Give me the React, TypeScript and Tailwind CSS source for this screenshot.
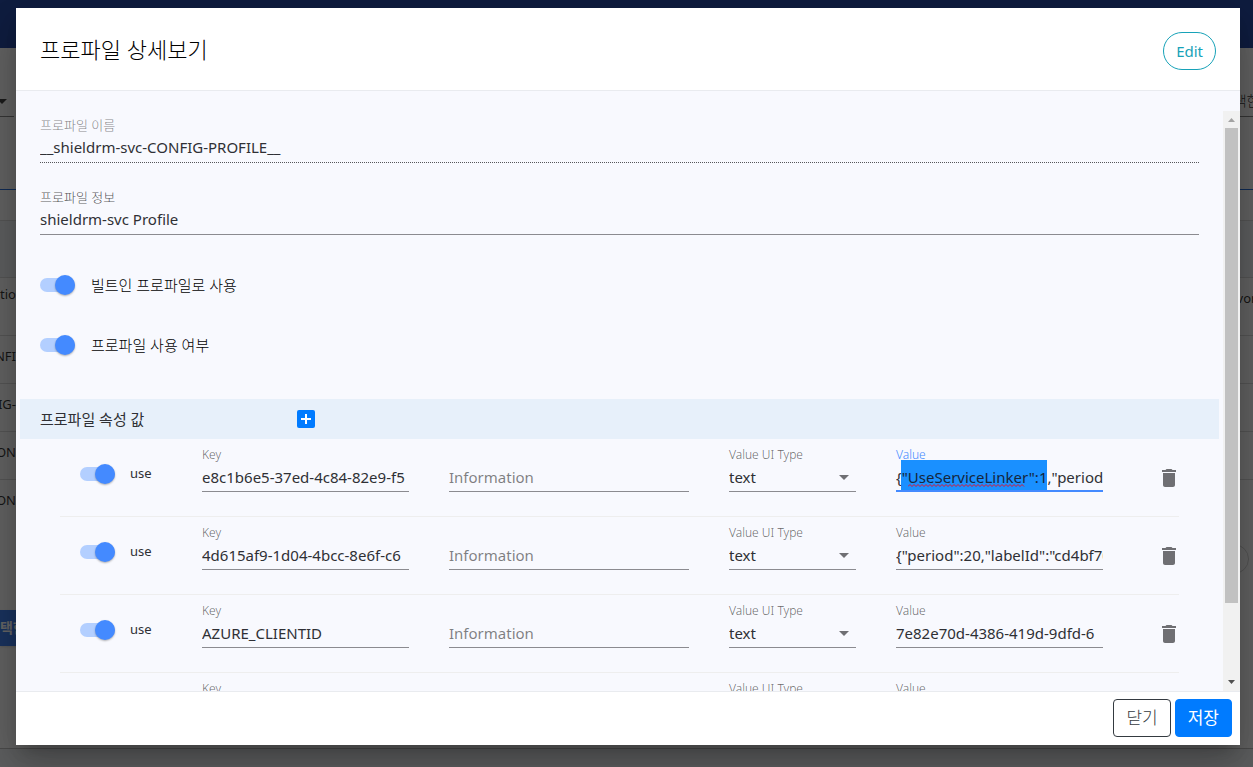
// ProfileDetailDialog: profile detail / edit dialog over the profile list page

import { useEffect, useRef } from 'react';

interface ProfileProperty {
  id: string;
  key: string;
  value: string;
}

const PROPERTIES: ProfileProperty[] = [
  { id: 'p1', key: 'e8c1b6e5-37ed-4c84-82e9-f5', value: '{"UseServiceLinker":1,"period":20}' },
  { id: 'p2', key: '4d615af9-1d04-4bcc-8e6f-c6', value: '{"period":20,"labelId":"cd4bf70"}' },
  { id: 'p3', key: 'AZURE_CLIENTID', value: '7e82e70d-4386-419d-9dfd-6' },
  { id: 'p4', key: '', value: '' },
];

// Part of the first value that is selected when the dialog opens
const SELECTED = '"UseServiceLinker":1';

const SQUIGGLE = 'M0 2.5' + 'l2 -2l2 2'.repeat(29);

function Toggle({ id, label, gap }: { id: string; label: string; gap: string }) {
  return (
    <label htmlFor={id} className={`flex items-center whitespace-nowrap ${gap}`}>
      <span className="relative flex h-5 w-[35px] shrink-0 items-center">
        <input id={id} type="checkbox" defaultChecked className="peer sr-only" />
        <span className="h-3.5 w-full rounded-full bg-[#b3cfff]" />
        <span className="absolute right-0 top-0 size-5 rounded-full bg-[#448aff] shadow-[0_1px_2px_rgba(0,0,0,0.3)]" />
      </span>
      {label}
    </label>
  );
}

function Background() {
  return (
    <div className="fixed inset-0 flex flex-col overflow-hidden bg-[#f8f8f8] text-[13px] font-normal leading-4 text-black/80" aria-hidden="true">
      <div className="h-12 shrink-0 bg-[#264aa0]" />

      <div className="flex h-[69px] shrink-0 items-end justify-between">
        <div className="flex h-7 w-3.5 justify-start border-b border-[#888]">
          <svg viewBox="0 0 7 5" className="mt-2.5 h-[5px] w-[7px]">
            <path d="M-3 0H7L2 5z" fill="#444" />
          </svg>
        </div>
        <div className="flex h-7 w-[13px] justify-center border-b border-[#888] text-sm font-light leading-6 whitespace-nowrap">택한</div>
      </div>
      <div className="h-[73px] shrink-0 border-b border-[#2a6fd6]" />
      <div className="h-[31px] shrink-0 border-b border-[#d4d4d4]" />
      <div className="h-[57px] shrink-0 border-b border-[#d4d4d4] bg-[#eceef1]" />
      <div className="flex h-[58px] shrink-0 items-start justify-between border-b border-[#d4d4d4] pt-2">
        <span className="w-4">tio</span>
        <span className="flex w-[13px] justify-center pt-1">vor</span>
      </div>
      {['NFI', 'FIG-', 'CON', 'CON'].map((text, i) => (
        <div key={i} className={`flex h-12 shrink-0 items-start pt-3 ${i < 3 ? 'border-b border-[#d4d4d4]' : ''}`}>
          <span className="flex w-4 justify-end">{text}</span>
        </div>
      ))}
      <div className="flex h-[82px] shrink-0 justify-end pt-4">
        <span className="mr-1 size-[30px] rounded-full border border-[#d0d0d0]" />
      </div>
      <div className="flex h-9 w-20 shrink-0 items-center bg-[#4180ee] text-sm font-bold text-white shadow">택한</div>
      <div className="mt-auto h-[19px] shrink-0 border-t border-[#bbb] bg-[#eceef1]" />

      <div className="absolute inset-0 bg-black/60" />
    </div>
  );
}

function PropertyRow({ item, active }: { item: ProfileProperty; active: boolean }) {
  const valueRef = useRef<HTMLInputElement>(null);

  useEffect(() => {
    const input = valueRef.current;
    if (!active || !input) return;
    const start = input.value.indexOf(SELECTED);
    input.focus({ preventScroll: true });
    input.setSelectionRange(start, start + SELECTED.length);
    input.scrollLeft = 0;
  }, [active]);

  const label = 'block text-[12px] leading-4 text-black/60';
  const field = 'block h-[29px] w-full min-w-0 rounded-none border-b border-[#8b8b90] bg-transparent text-[15px] font-normal outline-none';

  return (
    <div className="mx-10 grid h-[78px] grid-cols-[82px_minmax(0,207fr)_minmax(0,240fr)_minmax(0,127fr)_minmax(0,207fr)_36px] gap-x-10 border-b border-[#eeeeee] pl-5 pt-2">
      <div className="pt-[17px] text-[13px] font-normal">
        <Toggle id={`${item.id}-use`} label="use" gap="gap-[15px]" />
      </div>

      <div>
        <label htmlFor={`${item.id}-key`} className={label}>Key</label>
        <input id={`${item.id}-key`} defaultValue={item.key} className={field} />
      </div>

      <div className="pt-4">
        <input aria-label="Information" placeholder="Information" className={`${field} placeholder:text-black/50`} />
      </div>

      <div>
        <label htmlFor={`${item.id}-type`} className={label}>Value UI Type</label>
        <div className="relative">
          <select id={`${item.id}-type`} className={`${field} appearance-none`}>
            <option>text</option>
          </select>
          <svg viewBox="0 0 10 5" className="pointer-events-none absolute right-[7px] top-3 h-[5px] w-2.5">
            <path d="M0 0h10L5 5z" fill="#6f6f73" />
          </svg>
        </div>
      </div>

      <div className="relative">
        {/* full line height behind the selected text */}
        {active && <span className="absolute left-[5px] top-[13px] h-8 w-[146px] bg-[#1a90ff]" />}
        <label htmlFor={`${item.id}-value`} className={`relative block text-[12px] leading-4 ${active ? 'text-[#448aff]' : 'text-black/60'}`}>
          Value
        </label>
        <input
          ref={valueRef}
          id={`${item.id}-value`}
          defaultValue={item.value}
          spellCheck={false}
          className={`relative block h-[29px] w-full min-w-0 rounded-none bg-transparent text-[15px] font-normal outline-none selection:bg-[#1a90ff]/99 selection:text-[#15263c] ${
            active ? 'border-b-2 border-[#448aff]' : 'border-b border-[#8b8b90]'
          }`}
        />
        {/* spelling underline */}
        {active && (
          <svg viewBox="0 0 118 3" className="pointer-events-none absolute left-[12px] top-[37px] h-[3px] w-[118px]">
            <path d={SQUIGGLE} fill="none" stroke="#e0142c" />
          </svg>
        )}
      </div>

      <button type="button" aria-label="Delete" className="mt-[22px] flex h-[18px] w-5 justify-center justify-self-end">
        <svg viewBox="5 3 14 18" className="h-[18px] w-3.5">
          <path d="M6 19c0 1.1.9 2 2 2h8c1.1 0 2-.9 2-2V7H6v12zM19 4h-3.5l-1-1h-5l-1 1H5v2h14V4z" fill="#6f6f73" />
        </svg>
      </button>
    </div>
  );
}

function Scrollbar() {
  return (
    <div className="flex w-[17px] shrink-0 flex-col items-center bg-[#f1f1f1]" aria-hidden="true">
      <svg viewBox="0 0 17 17" className="size-[17px] shrink-0">
        <path d="M5 11h7L8.5 7z" fill="#a3a3a3" />
      </svg>
      <div className="flex w-[13px] flex-1 flex-col">
        <div className="h-[87%] bg-[#c1c1c1]" />
      </div>
      <svg viewBox="0 0 17 17" className="size-[17px] shrink-0">
        <path d="M5 6h7L8.5 10z" fill="#505050" />
      </svg>
    </div>
  );
}

export default function App() {
  return (
    <div className="font-['Noto_Sans','Noto_Sans_CJK_KR',sans-serif] font-light text-[#2f3035]">
      <Background />

      <div className="fixed inset-0 flex pb-[22px] pl-4 pr-[13px] pt-2">
        <div
          role="dialog"
          aria-labelledby="dialog-title"
          className="flex min-w-0 flex-1 flex-col bg-white shadow-[0_11px_15px_-7px_rgba(0,0,0,0.2),0_24px_38px_3px_rgba(0,0,0,0.14),0_9px_46px_8px_rgba(0,0,0,0.12)]"
        >
          {/* Header */}
          <header className="flex h-[83px] shrink-0 items-center justify-between border-b border-[#e9ebef] px-6 pt-1">
            <h2 id="dialog-title" className="pb-1 text-[22px] text-black">프로파일 상세보기</h2>
            <button type="button" className="h-[38px] rounded-full border border-[#17a2b8] px-3 text-[15px] font-normal text-[#17a2b8]">
              Edit
            </button>
          </header>

          {/* Body */}
          <div className="flex min-h-0 flex-1 bg-[#f8f9fe] pt-5">
            <div className="min-w-0 flex-1 overflow-hidden px-1">
              <div className="px-5">
                <div className="h-[72px] pt-1.5">
                  <label htmlFor="profile-name" className="block text-[13px] leading-4 text-black/50">프로파일 이름</label>
                  <input
                    id="profile-name"
                    readOnly
                    defaultValue="__shieldrm-svc-CONFIG-PROFILE__"
                    className="block h-[30px] w-full border-b border-dotted border-[#55565a] bg-transparent pb-0.5 text-[15px] font-normal outline-none"
                  />
                </div>
                <div className="h-[72px] pt-1.5">
                  <label htmlFor="profile-info" className="block text-[13px] leading-4 text-black/70">프로파일 정보</label>
                  <input
                    id="profile-info"
                    defaultValue="shieldrm-svc Profile"
                    className="block h-[30px] w-full border-b border-[#8b8b90] bg-transparent pb-0.5 text-[15px] font-normal outline-none"
                  />
                </div>
                <div className="flex h-[60px] items-center text-[15px] text-black">
                  <Toggle id="builtin" label="빌트인 프로파일로 사용" gap="gap-4" />
                </div>
                <div className="flex h-[60px] items-center text-[15px] text-black">
                  <Toggle id="enabled" label="프로파일 사용 여부" gap="gap-4" />
                </div>
              </div>

              <div className="mt-6 flex h-10 items-center bg-[#e7f0fa] px-5">
                <h3 className="w-[257px] text-[15px] font-normal">프로파일 속성 값</h3>
                <button type="button" aria-label="Add" className="flex size-[18px] items-center justify-center rounded-xs bg-[#007bff]">
                  <svg viewBox="0 0 10 10" className="size-2.5">
                    <path d="M5 0v10M0 5h10" stroke="white" strokeWidth="2" />
                  </svg>
                </button>
              </div>

              {PROPERTIES.map((item, i) => (
                <PropertyRow key={item.id} item={item} active={i === 0} />
              ))}
            </div>
            <Scrollbar />
          </div>

          {/* Footer */}
          <footer className="flex h-[54px] shrink-0 items-center justify-end gap-1 border-t border-[#e9ebef] px-2 pb-0.5">
            <button type="button" className="h-[38px] rounded border border-[#343a40] px-3 text-[17px] text-[#343a40]">
              닫기
            </button>
            <button type="button" className="h-[38px] rounded border border-[#007bff] bg-[#007bff] px-3 text-[17px] font-normal text-white">
              저장
            </button>
          </footer>
        </div>
      </div>
    </div>
  );
}
